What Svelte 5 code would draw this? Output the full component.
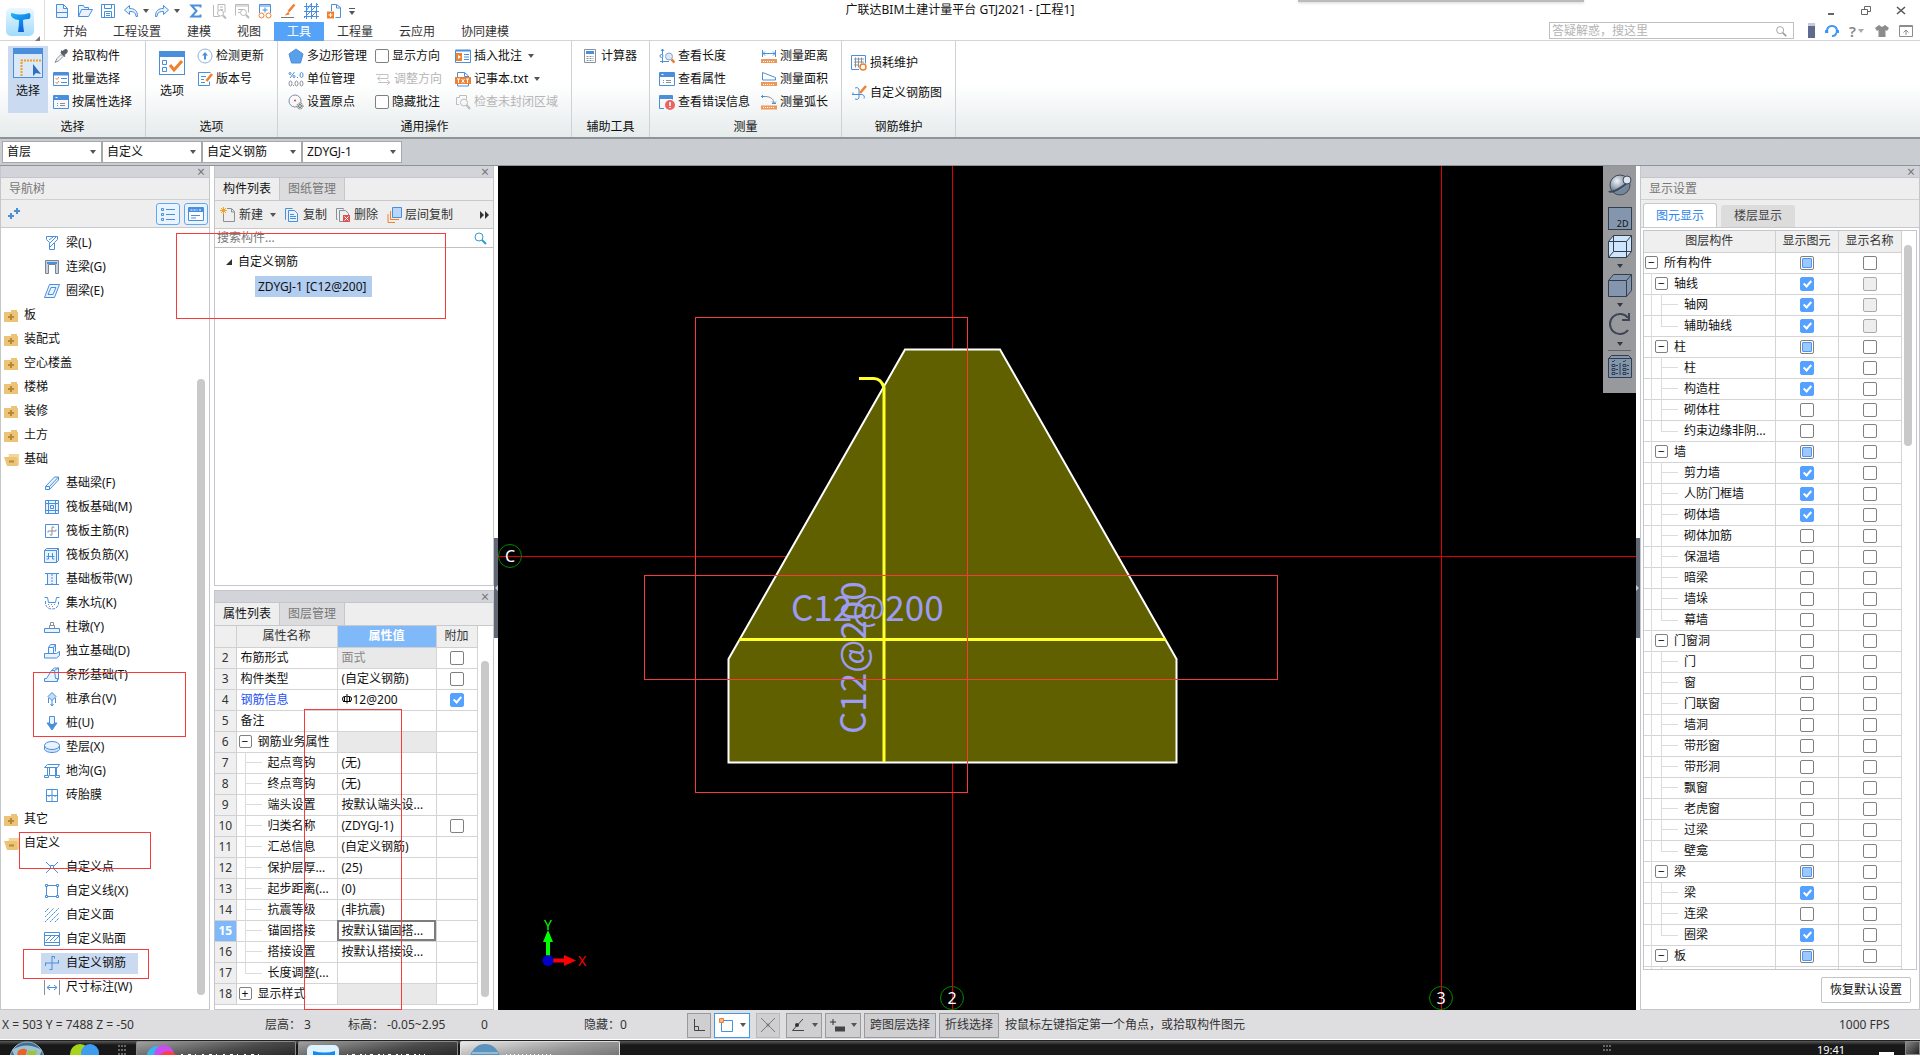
<script lang="ts">
  type Tool = { icon: string; label: string; disabled?: boolean; menu?: boolean; check?: boolean };
  type NavItem = { label: string; icon?: string; folder?: 'open' | 'closed' };
  type Prop = { no: number; name: string; value?: string; add?: boolean; kind?: string };
  type Layer = { label: string; level: number; show: 'on' | 'off' | 'mixed'; locked?: boolean; last?: boolean };

  const B = '#4a8fdc';
  const G = '#8a9099';
  const O = '#f08030';

  const icons: Record<string, string> = {
    file: `<path d="M2.500 1.500h7l4 4v9h-11zM9.500 1.500v4h4M2.500 9.500h11" fill="#eaf3fd"/>`,
    open: `<path d="M1.500 13.500v-11h5l1 2h4v2M1.500 13.500l3-7h11l-4 7z" fill="#eaf3fd"/>`,
    save: `<path d="M1.500 1.500h13v13h-13zM4.500 1.500v4h7v-4M4.500 14.500v-6h7v6M6 10.500h4M6 12.500h4"/>`,
    undo: `<path d="M6.500 2.500l-5 4.500 5 4.500v-3c4 0 6 .5 6.500 5h1.500c0-6-3-8-8-8z" fill="#eaf3fd"/>`,
    redo: `<path d="M9.500 2.500l5 4.500-5 4.500v-3c-4 0-6 .5-6.500 5h-1.500c0-6 3-8 8-8z" fill="#eaf3fd"/>`,
    sum: `<path d="M12.500 4.500v-2h-9l5 5.500-5 5.500h9v-2" stroke-width="2"/>`,
    inspect: `<g stroke="#b9b9b9"><path d="M2.500 2v11.500h6M7 1.500h7v8M7 1.500v6M9 4h3M9 6.500h3"/><circle cx="9.500" cy="10" r="3"/><path d="M12 12.500l3 3" stroke-width="2"/></g>`,
    find: `<g stroke="#b9b9b9"><path d="M1.500 12.500v-11h13v8M1.500 3h13M4 6.500h5M4 9.500h2"/><circle cx="9.500" cy="9.500" r="3"/><path d="M12 12l3 3" stroke-width="2"/></g>`,
    glasses: `<path d="M2.500 10v-8.500h11v8.500M2.500 3h11M8 4.500v5M5.500 7h5"/><g stroke="${O}"><circle cx="4.500" cy="12.500" r="2.500"/><circle cx="11.500" cy="12.500" r="2.500"/></g>`,
    brush: `<path d="M14.500 1.500l-6 7" stroke="${O}" stroke-width="2.500"/><path d="M8.500 8.500l-4 4 5-1z" fill="${O}" stroke="none"/><path d="M1 14.500h13" stroke="#777"/>`,
    hatch: `<path d="M1 3.500h15M1 8.500h15M1 13.500h15M3.500 0v16M8.500 0v16M13.500 0v16M1 15L15 1M3 8l5-7M8 14l6-6"/>`,
    export: `<path d="M5.500 8v-6.500h5l4 3v10h-5M10.500 2v3h4"/><path d="M1 8.500h7v7h-7z" fill="${O}" stroke="none"/><path d="M4.500 10v4M2.500 12h4" stroke="#fff"/>`,
    picker: `<path d="M2 14.500l2-4 4-4 2 2-4 4z" stroke="${G}" fill="#f4f4f4"/><path d="M7.500 5l4 4 1-1-1-1c2-1 4-3 3-5s-3-1-5 1l-1-1z" fill="#58616b" stroke="none"/>`,
    batch: `<path d="M.500 1.500h15v13h-15z"/><path d="M1 2h14v2.500h-14z" fill="${B}" stroke="none"/><path d="M8 7.500h6M8 11.500h6"/><path d="M2.500 7l1.500 1.500 2-2.500M2.500 11l1.500 1.500 2-2.500" stroke="${O}"/>`,
    props: `<path d="M.500 1.500h15v13h-15z"/><path d="M1 2h14v4h-14z" fill="${B}" stroke="none"/><path d="M2.500 3.500h2" stroke="#fff"/><path d="M4 9.500h1M7 9.500h5M4 11.500h1M7 11.500h5" stroke="${G}"/>`,
    update: `<circle cx="8" cy="8" r="7" stroke="#8fb4dd"/><path d="M8 4l3 3.500h-2v4h-2v-4H5z" fill="${B}" stroke="none"/>`,
    version: `<path d="M10 1.500H1.500v13h11v-4M1.500 1.500h12M4 5.500h5M4 8.500h3M4 11.500h4"/><path d="M15 3l-5.500 7" stroke="${O}" stroke-width="2.500"/>`,
    polygon: `<path d="M8 1l7 5-2.500 9h-9L1 6z" fill="#5a9fec" stroke="${B}"/>`,
    unit: `<g stroke="${G}"><ellipse cx="2.500" cy="12.500" rx="1.500" ry="2.500"/><ellipse cx="8.500" cy="12.500" rx="1.500" ry="2.500"/><ellipse cx="13.500" cy="12.500" rx="1.500" ry="2.500"/><path d="M5 14.500h1"/></g><circle cx="2" cy="2.500" r="1"/><circle cx="6" cy="5.500" r="1"/><path d="M2 7l4.500-6M9 6.500h1"/><ellipse cx="13.500" cy="4" rx="1.500" ry="2.500"/>`,
    origin: `<circle cx="7" cy="7" r="6" stroke="#7b90ad"/><circle cx="7" cy="6.500" r="1" fill="#e04030" stroke="none"/><circle cx="12" cy="12" r="3" fill="#ddd" stroke="#777" stroke-dasharray="1.500 1"/><circle cx="12" cy="12" r="1.500" stroke="#777"/>`,
    direct: `<g stroke="#c2c2c2"><path d="M1 3.500h12v4H3M3 11.500h12M5.500 5l-3 2.500 3 2.500M12 9l3 2.500-3 2.500"/></g>`,
    insert: `<path d="M.500 2.500h15v12h-15z"/><path d="M.500 1.500h15v2h-15z" fill="${B}" stroke="none"/><path d="M1 5h6v8h-6z" fill="${O}" stroke="none"/><path d="M3 7l3 2-3 2z" fill="#fff" stroke="none"/><path d="M9 6.500h5M9 9h5M9 11.500h5"/>`,
    txt: `<path d="M2.500 7v-5.500h7l4 3.500v2M2.500 13v2h11v-2M9.500 1.500v4h4"/><path d="M0 6h16v7h-16z" fill="${O}" stroke="none"/><path d="M2 8h3M3.500 8v4M6.500 8l3 4M9.500 8l-3 4M11 8h3M12.500 8v4" stroke="#fff"/>`,
    region: `<g stroke="#bdbdbd"><path d="M4 10.500h-2.500v-7h3v-2h7v4"/><circle cx="9" cy="8.500" r="3.500"/><path d="M11.500 11l3.500 4" stroke-width="2"/></g>`,
    calc: `<path d="M2.500 1.500h11v13h-11z" stroke="${G}" fill="#fff"/><path d="M4 3h8v3h-8z" fill="${B}" stroke="none"/><path d="M4.500 8.500h7M4.500 10.500h7M4.500 12.500h7" stroke="${G}" stroke-dasharray="2 1"/>`,
    length: `<path d="M3.500 1v14M1 13.500h9M2 3l1.500-2 1.500 2"/><circle cx="2.500" cy="8" r="1.500" fill="#fff"/><circle cx="10" cy="8.500" r="3.500" fill="#dce8f8" stroke="#8aa6c8"/><path d="M12.500 11.500l3 3" stroke="${O}" stroke-width="2.500"/>`,
    error: `<path d="M5 14.500H.500v-13h13v4"/><path d="M1 2h12v3h-12z" fill="${B}" stroke="none"/><circle cx="11" cy="11" r="5" fill="#ea6464" stroke="none"/><path d="M11 8v4M11 13v1" stroke="#fff" stroke-width="1.500"/>`,
    dist: `<path d="M1.500 2v7M14.500 2v7M2 5.500h12M4 3.500l-2 2 2 2M12 3.500l2 2-2 2"/><path d="M0 11h16v4h-16z" fill="#ee9858" stroke="none"/><path d="M2 13.500h12" stroke="#fff" stroke-dasharray="1 1"/>`,
    area: `<path d="M1.500 9v-7.500l13 5v2.500z"/><path d="M0 11h16v4h-16z" fill="#ee9858" stroke="none"/><path d="M2 13.500h12" stroke="#fff" stroke-dasharray="1 1"/>`,
    arc: `<path d="M4 2.500c6 0 9 3 9 7" stroke="${G}"/><path d="M1.500 1v3M0 2.500h4M11 7.500l2 2 2-2M11 9.500h4"/><path d="M0 11.500h16v4h-16z" fill="#ee9858" stroke="none"/><path d="M2 13.500h12" stroke="#fff" stroke-dasharray="1 1"/>`,
    loss: `<path d="M8 14.500h-7.500v-14h14v8"/><path d="M3 4h10M3 7h10M3 10h5M4.500 2.500v10M7.500 2.500v10M10.500 2.500v6" stroke="${G}"/><circle cx="12" cy="12" r="3" stroke="${O}" stroke-width="1.500"/>`,
    rebarpic: `<path d="M8 13v-9a3 3 0 0 0-4-1M1 9.500h10a3 3 0 0 1 2 4M2 9.500v-2M8 13a3 3 0 0 1-4 1"/><path d="M15 1l-6 7" stroke="${O}" stroke-width="2.500"/>`,
    beam: `<path d="M2.500 1.500h11v3l-3 3v7h-5v-7l-3-3zM5 5l4-3M6 8l6-6M6 12l4-4"/>`,
    link: `<path d="M1.500 1.500h13v13h-3v-9h-7v9h-3z" fill="#c9d3dd" stroke="#788592"/><path d="M3 4h10" stroke="${B}" stroke-width="2"/>`,
    ring: `<path d="M5.500 1.500h10l-5 13H.500zM7 4.500h5l-3 7H4z" fill="#eaf3fd"/>`,
    bar: `<path d="M1.500 11.500l9-9.500h4v3l-9 9.500h-4zM1.500 11.500h4v3M5.500 11.500l9-9.500" fill="#eaf3fd"/>`,
    raft: `<path d="M1.500 1.500h13v13h-13zM4.500 1.500v13M11.500 1.500v13M1.500 4.500h13M1.500 11.500h13M6.500 6.500h3v3h-3z" fill="#eaf3fd"/>`,
    raftmain: `<path d="M1.500 1.500h13v13h-13z"/><path d="M8 4v8M4 8h8M8 4c2-1 2 1 2 1M8 12c-2 1-2-1-2-1M4 8v1.500M12 8V6.500" stroke="${G}"/>`,
    raftneg: `<path d="M.500 3.500h12v12h-12zM.500 3.500l2-2h12v12l-2 2M12.500 3.500l2-2" fill="#eaf3fd"/><path d="M4.500 6v6M8.500 6v6M2.500 9.500h8M4.500 12h-2M8.500 12h2"/>`,
    strip: `<path d="M3.500 2.500h9v11h-9z" fill="#eaf3fd" stroke="none"/><path d="M1 2.500h14M1 13.500h14M3.500 3v10M12.500 3v10"/><path d="M8 3v10" stroke-dasharray="2 1"/>`,
    pit: `<path d="M.500 2.500h3l1 5h7l1-5h3"/><path d="M1.500 6v3c1 4 4 5 6.500 5s5.500-1 6.500-5v-3" stroke-dasharray="3 1"/><path d="M4 9.500h8M5 11.500h6" stroke="${G}" stroke-dasharray="1 2"/>`,
    pier: `<path d="M.500 9.500h15v4H.500z" fill="#eaf3fd"/><path d="M5.500 9.500v-3h5v3M6.500 6v-2.500h3v2.500" stroke="${G}"/>`,
    indep: `<path d="M.500 10.500h12l3-2v4l-3 2.500H.500zM4.500 10.500v-6l2-3h5v7M9.500 10.500v-6h-5M9.500 4.500l2-3" fill="#eaf3fd"/>`,
    trap: `<path d="M.500 14.500v-3h2l5-8h3l1 8h2v3zM7.500 3.500l3-2.500h4v11l-2 2.500M10.500 3.500l4-2.500" fill="#eaf3fd"/>`,
    cap: `<path d="M8 1.500l4 4-4 4-4-4z" fill="#c5dcf6"/><path d="M8 9v6M4.500 7v5M11.500 7v5M6.500 13l1.500 2 1.500-2"/>`,
    pile: `<path d="M5.500 1.500h5v8h-5z" fill="#eaf3fd"/><path d="M3 8h3v2h4V8h3l-5 7z" fill="${B}"/>`,
    cushion: `<path d="M.500 6.500v4c2 4 13 4 15 0v-4" fill="#cfe2f8"/><ellipse cx="8" cy="6.500" rx="7.500" ry="4" fill="#eaf3fd"/>`,
    trench: `<path d="M.500 4.500l3-3h12l-2 3zM3.500 4.500v8M12.500 4.500v8M.500 12.500h4v2h-4zM11.500 12.500h4v2h-4zM5.500 5v7.500h6V5"/>`,
    brick: `<path d="M2.500 2.500h11v12h-11zM8 2.500v12M2.500 8.500h11M5 8v2M11 8v2"/>`,
    point: `<path d="M2 3l4 4M14 3l-4 4M2 14l4-4M14 14l-4-4M6.500 6.500h3v3h-3z"/>`,
    line: `<path d="M3.500 2.500h9M3.500 13.500h9M2.500 3.500v9M13.500 3.500v9M1.500 1.500h2v2h-2zM12.500 1.500h2v2h-2zM1.500 12.500h2v2h-2zM12.500 12.500h2v2h-2z"/>`,
    face: `<path d="M1 5l4-4M1 10l9-9M1 15L15 1M6 15l9-9M11 15l4-4" stroke-dasharray="2 .500"/>`,
    veneer: `<path d="M.500 1.500h15v13H.500zM.500 4.500h15M.500 11.500h15M2 10l5-5M6 10l5-5M10 10l5-5"/>`,
    rebar: `<path d="M8 1v14M1 8h14M8 1.500h2.500v2M8 14.500H5.500M1.500 8v3M14.500 8V5"/>`,
    dim: `<path d="M.500 1v15M15.500 1v15" stroke="${G}"/><path d="M3 8.500h10M6 6L3 8.500 6 11M10 6l3 2.500-3 2.500"/>`,
    closed: `<path d="M0 5h14v10H0zM7 3h6v2H7z" fill="#ecc477" stroke="none"/><path d="M7 7v6M4 10h6" stroke="#b98a35" stroke-width="2"/>`,
    opened: `<path d="M5 3h10v11H3z" fill="#f4d798" stroke="none"/><path d="M0 6h13l1 9H3z" fill="#ecc477" stroke="none"/><path d="M5 10.500h5" stroke="#b98a35" stroke-width="2"/>`,
    newdoc: `<path d="M3.500 6v8.500h11v-10l-3-3H7M11.500 2v3h3" stroke="${G}"/><path d="M1 1l5 5M6 1L1 6M3.500 0v7M0 3.500h7" stroke="#f5a020"/>`,
    copy: `<path d="M2 12.500h-.500v-11h7"/><path d="M4.500 3.500h6l3 3v8h-9zM6 7.500h4M6 9.500h6M6 11.500h6" fill="#eaf3fd"/>`,
    remove: `<path d="M2.500 12.500h-1v-11h7v1M9 14.500H4.500v-11h6l3 3v2" stroke="${G}"/><path d="M8 8h7v7H8z" fill="#dc5050" stroke="none"/><path d="M9.500 9.500l4 4M13.500 9.500l-4 4" stroke="#fff"/>`,
    floors: `<path d="M4.500 4v8.500H13M2 7v8.500h7" stroke="${O}"/><path d="M6.500 .500h9v10h-9z" fill="#b9d6fb"/>`,
    list: `<path d="M1.500 2.500h2v2h-2zM1.500 7.500h2v2h-2zM1.500 12.500h2v2h-2zM6 3.500h9M6 8.500h9M6 13.500h9"/>`,
    panel: `<path d="M.500 1.500h15v13H.500z" fill="#fff"/><path d="M1 2h14v4H1z" fill="${B}" stroke="none"/><path d="M2.500 4h7M11 4h3" stroke="#fff" stroke-dasharray="2 1"/><path d="M3 9.500h9M3 12h5"/>`,
    search: `<circle cx="7" cy="7" r="4"/><path d="M10 10l4 4" stroke-width="2"/>`,
    ortho: `<path d="M3.500 2v11.500H14M3.500 9.500h4v4" stroke="#444"/>`,
    rect: `<path d="M3.500 3.500h11v11h-11z"/><path d="M1.500 1.500h4v4h-4z" fill="#f8b68a" stroke="${O}"/>`,
    cross: `<path d="M1 1l14 14M15 1L1 15" stroke="#777"/><circle cx="8" cy="8" r="1.500" fill="#777" stroke="none"/>`,
    angle: `<path d="M13 2L2.500 13.500H14" stroke="#444"/><circle cx="7" cy="8" r="2" fill="#333" stroke="none"/>`,
    dyn: `<path d="M4 2v6M1 5h6" stroke="#333"/><path d="M6 9.500h10v5H6z" fill="#444" stroke="none"/>`,
  };

  const quickA = ['file', 'open', 'save'];
  const quickB = ['sum', 'inspect', 'find', 'glasses', 'brush', 'hatch', 'export'];
  const tabs = ['开始', '工程设置', '建模', '视图', '工具', '工程量', '云应用', '协同建模'];

  const pickTools: Tool[] = [
    { icon: 'picker', label: '拾取构件' },
    { icon: 'batch', label: '批量选择' },
    { icon: 'props', label: '按属性选择' },
  ];
  const optionTools: Tool[] = [
    { icon: 'update', label: '检测更新' },
    { icon: 'version', label: '版本号' },
  ];
  const commonTools: Tool[][] = [
    [
      { icon: 'polygon', label: '多边形管理' },
      { icon: 'unit', label: '单位管理' },
      { icon: 'origin', label: '设置原点' },
    ],
    [
      { icon: '', label: '显示方向', check: true },
      { icon: 'direct', label: '调整方向', disabled: true },
      { icon: '', label: '隐藏批注', check: true },
    ],
    [
      { icon: 'insert', label: '插入批注', menu: true },
      { icon: 'txt', label: '记事本.txt', menu: true },
      { icon: 'region', label: '检查未封闭区域', disabled: true },
    ],
  ];
  const measureTools: Tool[][] = [
    [
      { icon: 'length', label: '查看长度' },
      { icon: 'props', label: '查看属性' },
      { icon: 'error', label: '查看错误信息' },
    ],
    [
      { icon: 'dist', label: '测量距离' },
      { icon: 'area', label: '测量面积' },
      { icon: 'arc', label: '测量弧长' },
    ],
  ];
  const rebarTools: Tool[] = [
    { icon: 'loss', label: '损耗维护' },
    { icon: 'rebarpic', label: '自定义钢筋图' },
  ];

  const combos = [
    { name: '楼层', value: '首层' },
    { name: '类别', value: '自定义' },
    { name: '构件类型', value: '自定义钢筋' },
    { name: '构件', value: 'ZDYGJ-1' },
  ];

  const nav: NavItem[] = [
    { label: '梁(L)', icon: 'beam' },
    { label: '连梁(G)', icon: 'link' },
    { label: '圈梁(E)', icon: 'ring' },
    { label: '板', folder: 'closed' },
    { label: '装配式', folder: 'closed' },
    { label: '空心楼盖', folder: 'closed' },
    { label: '楼梯', folder: 'closed' },
    { label: '装修', folder: 'closed' },
    { label: '土方', folder: 'closed' },
    { label: '基础', folder: 'open' },
    { label: '基础梁(F)', icon: 'bar' },
    { label: '筏板基础(M)', icon: 'raft' },
    { label: '筏板主筋(R)', icon: 'raftmain' },
    { label: '筏板负筋(X)', icon: 'raftneg' },
    { label: '基础板带(W)', icon: 'strip' },
    { label: '集水坑(K)', icon: 'pit' },
    { label: '柱墩(Y)', icon: 'pier' },
    { label: '独立基础(D)', icon: 'indep' },
    { label: '条形基础(T)', icon: 'trap' },
    { label: '桩承台(V)', icon: 'cap' },
    { label: '桩(U)', icon: 'pile' },
    { label: '垫层(X)', icon: 'cushion' },
    { label: '地沟(G)', icon: 'trench' },
    { label: '砖胎膜', icon: 'brick' },
    { label: '其它', folder: 'closed' },
    { label: '自定义', folder: 'open' },
    { label: '自定义点', icon: 'point' },
    { label: '自定义线(X)', icon: 'line' },
    { label: '自定义面', icon: 'face' },
    { label: '自定义贴面', icon: 'veneer' },
    { label: '自定义钢筋', icon: 'rebar' },
    { label: '尺寸标注(W)', icon: 'dim' },
  ];
  let current = $state('自定义钢筋');

  const props: Prop[] = [
    { no: 2, name: '布筋形式', value: '面式', add: false, kind: 'readonly' },
    { no: 3, name: '构件类型', value: '(自定义钢筋)', add: false },
    { no: 4, name: '钢筋信息', value: '12@200', add: true, kind: 'rebar' },
    { no: 5, name: '备注' },
    { no: 6, name: '钢筋业务属性', kind: 'minus' },
    { no: 7, name: '起点弯钩', value: '(无)', kind: 'child' },
    { no: 8, name: '终点弯钩', value: '(无)', kind: 'child' },
    { no: 9, name: '端头设置', value: '按默认端头设...', kind: 'child' },
    { no: 10, name: '归类名称', value: '(ZDYGJ-1)', add: false, kind: 'child' },
    { no: 11, name: '汇总信息', value: '(自定义钢筋)', kind: 'child' },
    { no: 12, name: '保护层厚...', value: '(25)', kind: 'child' },
    { no: 13, name: '起步距离(...', value: '(0)', kind: 'child' },
    { no: 14, name: '抗震等级', value: '(非抗震)', kind: 'child' },
    { no: 15, name: '锚固搭接', value: '按默认锚固搭...', kind: 'child' },
    { no: 16, name: '搭接设置', value: '按默认搭接设...', kind: 'child' },
    { no: 17, name: '长度调整(...', kind: 'child' },
    { no: 18, name: '显示样式', kind: 'plus' },
  ];

  const layers: Layer[] = [
    { label: '所有构件', level: 1, show: 'mixed' },
    { label: '轴线', level: 2, show: 'on', locked: true },
    { label: '轴网', level: 3, show: 'on', locked: true },
    { label: '辅助轴线', level: 3, show: 'on', locked: true, last: true },
    { label: '柱', level: 2, show: 'mixed' },
    { label: '柱', level: 3, show: 'on' },
    { label: '构造柱', level: 3, show: 'on' },
    { label: '砌体柱', level: 3, show: 'off' },
    { label: '约束边缘非阴...', level: 3, show: 'off', last: true },
    { label: '墙', level: 2, show: 'mixed' },
    { label: '剪力墙', level: 3, show: 'on' },
    { label: '人防门框墙', level: 3, show: 'on' },
    { label: '砌体墙', level: 3, show: 'on' },
    { label: '砌体加筋', level: 3, show: 'off' },
    { label: '保温墙', level: 3, show: 'off' },
    { label: '暗梁', level: 3, show: 'off' },
    { label: '墙垛', level: 3, show: 'off' },
    { label: '幕墙', level: 3, show: 'off', last: true },
    { label: '门窗洞', level: 2, show: 'off' },
    { label: '门', level: 3, show: 'off' },
    { label: '窗', level: 3, show: 'off' },
    { label: '门联窗', level: 3, show: 'off' },
    { label: '墙洞', level: 3, show: 'off' },
    { label: '带形窗', level: 3, show: 'off' },
    { label: '带形洞', level: 3, show: 'off' },
    { label: '飘窗', level: 3, show: 'off' },
    { label: '老虎窗', level: 3, show: 'off' },
    { label: '过梁', level: 3, show: 'off' },
    { label: '壁龛', level: 3, show: 'off', last: true },
    { label: '梁', level: 2, show: 'mixed' },
    { label: '梁', level: 3, show: 'on' },
    { label: '连梁', level: 3, show: 'off' },
    { label: '圈梁', level: 3, show: 'on', last: true },
    { label: '板', level: 2, show: 'mixed' },
    { label: '', level: 3, show: 'on' },
  ];
</script>

{#snippet icon(name: string)}
  <svg class="icon" viewBox="0 0 16 16" aria-hidden="true">{@html icons[name]}</svg>
{/snippet}

{#snippet tool(t: Tool)}
  {#if t.check}
    <label class="tool"><input type="checkbox" />{t.label}</label>
  {:else}
    <button class="tool" disabled={t.disabled}>
      {@render icon(t.icon)}{t.label}{#if t.menu}<i class="caret"></i>{/if}
    </button>
  {/if}
{/snippet}

<div class="app">
  <header>
    <div class="left">
      <button class="logo" aria-label="菜单">
        <svg viewBox="0 0 38 40" width="38" height="40">
          <defs>
            <linearGradient id="lg" x1="0" y1="0" x2="0" y2="1"><stop offset="0" stop-color="#eaf7ff" /><stop offset="1" stop-color="#a2dbfb" /></linearGradient>
            <linearGradient id="lt" x1="0" y1="0" x2="0.6" y2="1"><stop offset="0" stop-color="#1fb9f6" /><stop offset="1" stop-color="#0c5ee0" /></linearGradient>
          </defs>
          <rect x="3" y="7" width="28" height="28" rx="5" fill="url(#lg)" />
          <path d="M9 12q8 3 17 0c2 0 2 5 0 6q-4 0-6 1 0 6 1 12h-6q1-6 1-12-4 0-6-2c-2-1-3-5-1-5z" fill="url(#lt)" />
          <path d="M37 35v5h-5z" fill="#777" />
        </svg>
      </button>
      <div class="heads">
        <div class="quick">
          {#each quickA as q}<button class="q" aria-label={q}>{@render icon(q)}</button>{/each}
          <button class="q wide" aria-label="撤销">{@render icon('undo')}<i class="caret"></i></button>
          <button class="q wide" aria-label="恢复">{@render icon('redo')}<i class="caret"></i></button>
          <span class="qgap"></span>
          {#each quickB as q}<button class="q" aria-label={q}>{@render icon(q)}</button>{/each}
          <button class="q more" aria-label="更多"><i></i><i class="caret"></i></button>
        </div>
        <nav class="tabs">
          {#each tabs as t}<button class:active={t === '工具'}>{t}</button>{/each}
        </nav>
      </div>
    </div>
    <h1>广联达BIM土建计量平台 GTJ2021 - [工程1]</h1>
    <div class="right">
      <div class="shade"></div>
      <div class="win">
        <button aria-label="最小化"><svg width="12" height="12"><path d="M3 9h6" stroke="#666" stroke-width="2" /></svg></button>
        <button aria-label="还原"><svg width="12" height="12"><path d="M4.500 4v-2.500h6v5H8M1.500 4.500h6v5h-6z" stroke="#666" fill="none" /></svg></button>
        <button aria-label="关闭"><svg width="12" height="12"><path d="M2 2l8 7M10 2L2 9" stroke="#555" stroke-width="1.500" /></svg></button>
      </div>
      <div class="help">
        <div class="ask"><input aria-label="搜索帮助" placeholder="答疑解惑，搜这里" />{@render icon('search')}</div>
        <span class="avatar"></span>
        <button aria-label="客服"><svg width="14" height="14" fill="none" stroke="#3b97f5" stroke-width="2"><path d="M2.500 9C1 4 4 2 7 2s6 2 4.500 7M11 9c0 3-2 3-4 3" /><path d="M1.500 6v3M12.500 6v3" stroke-width="3" /></svg></button>
        <button class="qm" aria-label="帮助">?<i class="caret"></i></button>
        <button aria-label="皮肤"><svg width="14" height="14"><path d="M4 1l3 2 3-2 4 3-2 3-1.500-1v7h-7V6L2 7 0 4z" fill="#8c8c8c" /></svg></button>
        <button aria-label="折叠功能区"><svg width="14" height="14" fill="none" stroke="#8c8c8c"><path d="M.500 1.500h13v11H.500zM1 2.500h12M7 11V6M4.500 8.500L7 6l2.500 2.500" /></svg></button>
      </div>
    </div>
  </header>

  <section class="ribbon">
    <div class="group g1">
      <div class="body">
        <button class="big sel">
          <svg width="30" height="30" fill="none">
            <rect x=".5" y=".5" width="29" height="29" fill="#dbe8f8" stroke={B} /><path d="M0 0h30v6H0z" fill={B} />
            <path d="M8.500 28V12.500H28" stroke="#f0a020" stroke-width="2" stroke-dasharray="2 1" /><path d="M20 16v12l3-3 5 1z" fill="#2f6fc4" />
          </svg>
          选择
        </button>
        <div class="col">{#each pickTools as t}{@render tool(t)}{/each}</div>
      </div>
      <div class="name">选择</div>
    </div>
    <div class="group g2">
      <div class="body">
        <button class="big opt">
          <svg width="26" height="24" fill="none">
            <rect x=".5" y=".5" width="25" height="23" fill="#fff" stroke={B} /><path d="M0 0h26v6H0z" fill={B} />
            <path d="M3.500 9.500h4v4h-4zM3.500 16.500h4v4h-4z" stroke={B} /><path d="M11 14l4 5 8-9" stroke={O} stroke-width="3" />
          </svg>
          选项
        </button>
        <div class="col">{#each optionTools as t}{@render tool(t)}{/each}</div>
      </div>
      <div class="name">选项</div>
    </div>
    <div class="group g3">
      <div class="body">
        {#each commonTools as c}<div class="col">{#each c as t}{@render tool(t)}{/each}</div>{/each}
      </div>
      <div class="name">通用操作</div>
    </div>
    <div class="group g4">
      <div class="body"><div class="col">{@render tool({ icon: 'calc', label: '计算器' })}</div></div>
      <div class="name">辅助工具</div>
    </div>
    <div class="group g5">
      <div class="body">
        {#each measureTools as c}<div class="col">{#each c as t}{@render tool(t)}{/each}</div>{/each}
      </div>
      <div class="name">测量</div>
    </div>
    <div class="group g6">
      <div class="body"><div class="col loose">{#each rebarTools as t}{@render tool(t)}{/each}</div></div>
      <div class="name">钢筋维护</div>
    </div>
  </section>

  <div class="combos">
    {#each combos as c}
      <label class="combo"><select aria-label={c.name}><option>{c.value}</option></select><i class="caret"></i></label>
    {/each}
  </div>

  <main>
    <aside class="panel nav">
      <div class="strip"><button aria-label="关闭导航树">×</button></div>
      <div class="title">导航树</div>
      <div class="navbar">
        <svg width="14" height="12" stroke={B} stroke-width="2"><path d="M3 5v6M0 8h6M9 0v6M6 3h6" /></svg>
        <span class="grow"></span>
        <button class="view" aria-label="列表视图">{@render icon('list')}</button>
        <button class="view" aria-label="面板视图">{@render icon('panel')}</button>
      </div>
      <div class="scroller">
        <ul>
          {#each nav as n}
            <li>
              <button class:folder={n.folder} class:current={current === n.label} onclick={() => (current = n.label)}>
                {@render icon(n.folder ? (n.folder === 'open' ? 'opened' : 'closed') : n.icon ?? '')}{n.label}
              </button>
            </li>
          {/each}
        </ul>
        <div class="bar"><div class="thumb low"></div></div>
      </div>
    </aside>

    <div class="mid">
      <section class="panel comps">
        <div class="strip"><button aria-label="关闭构件列表">×</button></div>
        <div class="ptabs"><button class="on">构件列表</button><button>图纸管理</button></div>
        <div class="compbar">
          <button>{@render icon('newdoc')}新建<i class="caret"></i></button>
          <button>{@render icon('copy')}复制</button>
          <button>{@render icon('remove')}删除</button>
          <button>{@render icon('floors')}层间复制</button>
          <span class="grow"></span>
          <svg width="9" height="8" fill="#333"><path d="M0 0l4 4-4 4zM5 0l4 4-4 4z" /></svg>
        </div>
        <div class="find"><input aria-label="搜索构件" placeholder="搜索构件..." />{@render icon('search')}</div>
        <div class="tree">
          <div class="root"><svg width="6" height="6"><path d="M6 0v6H0z" fill="#333" /></svg>自定义钢筋</div>
          <button class="leaf">ZDYGJ-1 [C12@200]</button>
        </div>
      </section>

      <section class="panel attrs">
        <div class="strip"><button aria-label="关闭属性列表">×</button></div>
        <div class="ptabs"><button class="on">属性列表</button><button>图层管理</button></div>
        <div class="scroller">
          <div class="sheet">
            <table>
              <colgroup><col class="c-no" /><col class="c-name" /><col class="c-val" /><col class="c-add" /></colgroup>
              <thead><tr><th></th><th>属性名称</th><th class="hot">属性值</th><th>附加</th></tr></thead>
              <tbody>
                {#each props as p}
                  <tr>
                    <th class:hot={p.no === 15}>{p.no}</th>
                    <td>
                      <div class="cell">
                        {#if p.kind === 'minus' || p.kind === 'plus'}
                          <button class="toggle" aria-label="展开或折叠">{p.kind === 'minus' ? '−' : '+'}</button>
                        {:else if p.kind === 'child'}
                          <span class="rail branch" class:last={p.no === 17}></span>
                        {/if}
                        <span class:key={p.kind === 'rebar'}>{p.name}</span>
                      </div>
                    </td>
                    <td class:grey={p.kind === 'readonly' || p.kind === 'minus' || p.kind === 'plus'} class:focus={p.no === 15}>
                      {#if p.kind === 'rebar'}<svg class="grade" width="10" height="10" fill="none" stroke="#000"><path d="M5 0v9.500M2.500 3v4M7.500 3v4M1 7.500h8M4.500 2.500h-2q-2 0-2 2.500t2 2.500M5.500 2.500h2q2 0 2 2.500t-2 2.500" /></svg>{/if}{p.value ?? ''}
                    </td>
                    <td class="mark">{#if p.add !== undefined}<input type="checkbox" aria-label="附加 {p.name}" checked={p.add} />{/if}</td>
                  </tr>
                {/each}
              </tbody>
            </table>
          </div>
          <div class="bar"><div class="thumb attr"></div></div>
        </div>
      </section>
    </div>

    <div class="split"><button aria-label="收起左侧"><svg width="4" height="6"><path d="M4 0v6L1 3z" fill="#c5cad2" /></svg></button></div>

    <div class="canvas">
      <svg class="scene" width="100%" height="100%">
        <g stroke="#e00000">
          <path d="M454.500 0v832M943.500 0v832" />
          <line x1="12" y1="390.500" x2="100%" y2="390.500" />
        </g>
        <path d="M407 183.500h95L678.500 493v103.500H230.500V493z" fill="#606000" stroke="#fff" stroke-width="2" />
        <g stroke="#ffff2a" stroke-width="3" fill="none">
          <path d="M361 212.500h15q7 0 10 9V596" /><path d="M241 473.500h427" />
        </g>
        <g fill="#9c9cf4" class="mark">
          <text x="293" y="455">C12@200</text>
          <text transform="translate(368 568) rotate(-90)">C12@200</text>
        </g>
        <g fill="none" stroke="#008a00">
          <circle cx="12" cy="390" r="11.500" /><circle cx="454" cy="832" r="11.500" /><circle cx="943" cy="832" r="11.500" />
        </g>
        <g stroke="#e00000"><path d="M454.500 820v24M943.500 820v24M0 390.500h24" /></g>
        <g fill="#fff" class="bubble">
          <text x="12" y="396">C</text><text x="454" y="838">2</text><text x="943" y="838">3</text>
        </g>
        <g>
          <path d="M50 790v-22" stroke="#0f0" stroke-width="4" /><path d="M45 776l5-12 5 12z" fill="#0f0" />
          <path d="M55 794.500h12" stroke="#f00" stroke-width="4" /><path d="M66 789l12 5.500-12 5.500z" fill="#f00" />
          <circle cx="50" cy="794.500" r="5.500" fill="#0000c8" />
        </g>
        <g class="axis"><text x="50" y="764" fill="#0f0">Y</text><text x="84" y="800" fill="#f00">X</text></g>
      </svg>
      <div class="viewbar">
        <button class="h37" aria-label="动态观察"><svg width="24" height="22"><defs><radialGradient id="sp" cx=".35" cy=".3"><stop offset="0" stop-color="#f2f5f8" /><stop offset="1" stop-color="#74869c" /></radialGradient></defs><circle cx="12" cy="11" r="10" fill="url(#sp)" stroke="#3d4858" /><path d="M1 17c2 3 18-5 21-13" stroke="#3d4858" fill="none" stroke-width="2" /><circle cx="19" cy="6" r="4" fill="#dfe5ec" stroke="#3d4858" /></svg></button>
        <button class="h30" aria-label="二维"><span class="two">2D</span></button>
        <button class="h26" aria-label="线框"><svg width="24" height="23" fill="#cfe5fb" stroke="#333e4c"><path d="M.500 6.500l5-6h18v16l-5 6H.500z" /><path d="M.500 6.500h18l5-6M18.500 6.500v16M5.500.500v16h18M5.500 16.500l-5 6" fill="none" /></svg></button>
        <i class="caret"></i>
        <button class="h26" aria-label="实体"><svg width="24" height="23" fill="#8396ae" stroke="#333e4c"><path d="M.500 6.500l5-6h18v16l-5 6H.500z" /><path d="M.500 6.500h18l5-6M18.500 6.500v16" fill="none" /></svg></button>
        <i class="caret"></i>
        <button class="h26" aria-label="旋转"><svg width="24" height="24" fill="none" stroke="#3d4654" stroke-width="2"><path d="M20 6A10 10 0 1 0 20 18M21 1v7h-7" /></svg></button>
        <i class="caret"></i>
        <hr />
        <button class="h30" aria-label="显示设置"><svg width="24" height="23" fill="#8396ae" stroke="#333e4c"><path d="M.500 3.500l3-3h17l3 3v19H.500zM.500 3.500h23" /><path d="M12 8v12M4 9.500h3v2H4zM4 13.500h3v2H4zM4 17.500h3v2H4zM15 9.500h3v2h-3zM15 13.500h3v2h-3zM15 17.500h3v2h-3zM8 10.500h2M8 14.500h2M8 18.500h2M19 10.500h2M19 14.500h2M19 18.500h2M4 6l1 1 2-2M15 6l1 1 2-2" fill="none" /></svg></button>
      </div>
    </div>

    <div class="split"><button aria-label="收起右侧"><svg width="4" height="6"><path d="M0 0v6l3-3z" fill="#c5cad2" /></svg></button></div>

    <aside class="panel layers">
      <div class="strip"><button aria-label="关闭显示设置">×</button></div>
      <div class="title">显示设置</div>
      <div class="ltabs"><button class="on">图元显示</button><button>楼层显示</button></div>
      <div class="scroller frame">
        <div class="sheet">
          <table>
            <colgroup><col class="c-layer" /><col class="c-box" /><col class="c-box" /></colgroup>
            <thead><tr><th>图层构件</th><th>显示图元</th><th>显示名称</th></tr></thead>
            <tbody>
              {#each layers as l}
                <tr>
                  <td>
                    <div class="cell lv">
                      {#if l.level > 1}<span class="rail" class:short={l.level === 2}></span>{/if}
                      {#if l.level < 3}
                        <button class="toggle" aria-label="展开或折叠">−</button>
                      {:else}
                        <span class="rail branch" class:last={l.last}></span>
                      {/if}
                      <span>{l.label}</span>
                    </div>
                  </td>
                  <td class="mark"><input type="checkbox" aria-label="显示图元 {l.label}" checked={l.show === 'on'} class:mixed={l.show === 'mixed'} /></td>
                  <td class="mark"><input type="checkbox" aria-label="显示名称 {l.label}" disabled={l.locked} /></td>
                </tr>
              {/each}
            </tbody>
          </table>
        </div>
        <div class="bar"><div class="thumb high"></div></div>
      </div>
      <div class="foot"><button>恢复默认设置</button></div>
    </aside>

    <svg class="notes" width="100%" height="100%" fill="none" stroke="#f53b3b" aria-hidden="true">
      <rect x="176.500" y="67.500" width="269" height="85" />
      <rect x="33.500" y="506.500" width="152" height="64" />
      <rect x="19.500" y="666.500" width="131" height="36" />
      <rect x="23.500" y="783.500" width="125" height="29" />
      <rect x="304.500" y="543.500" width="97" height="300" />
      <rect x="695.500" y="151.500" width="272" height="475" />
      <rect x="644.500" y="409.500" width="633" height="104" />
    </svg>
  </main>

  <footer>
    <span class="s-pos">X = 503 Y = 7488 Z = -50</span>
    <span class="s-floor">层高： 3</span>
    <span class="s-elev">标高： -0.05~2.95</span>
    <span class="s-num">0</span>
    <span class="s-num">隐藏：0</span>
    <div class="modes">
      <button aria-label="正交">{@render icon('ortho')}</button>
      <button class="lit" aria-label="矩形选择">{@render icon('rect')}<i class="caret"></i></button>
      <button class="dim" aria-label="交点">{@render icon('cross')}</button>
      <button aria-label="角度">{@render icon('angle')}<i class="caret"></i></button>
      <button aria-label="动态输入">{@render icon('dyn')}<i class="caret"></i></button>
      <button class="word">跨图层选择</button>
      <button class="word">折线选择</button>
    </div>
    <span>按鼠标左键指定第一个角点，或拾取构件图元</span>
    <span class="grow"></span>
    <span class="s-fps">1000 FPS</span>
  </footer>

  <div class="taskbar">
    <svg class="orb" width="136" height="14">
      <circle cx="27" cy="18" r="17" fill="#3b6f93" stroke="#9fb9c8" /><path d="M12 9q14-9 30 0l-2 5H14z" fill="#9dc0d4" />
      <path d="M18 10q5-4 9-1l-1 5h-9z" fill="#e8632a" /><path d="M28 9q5 2 9 0l-1 5h-9z" fill="#9ac53a" />
      <circle cx="80" cy="13" r="10" fill="#a4d51c" /><circle cx="90" cy="12" r="9" fill="#3f9df0" />
      <g fill="#666"><path d="M118 4h2v2h-2zM121 4h2v2h-2zM124 4h2v2h-2zM118 8h2v2h-2zM121 8h2v2h-2zM124 8h2v2h-2zM118 12h2v2h-2zM121 12h2v2h-2zM124 12h2v2h-2z" /></g>
    </svg>
    <button class="task" aria-label="任务一"><svg width="130" height="14"><circle cx="20" cy="14" r="10" fill="#38b4ee" /><circle cx="27" cy="13" r="10" fill="#c94df0" /><circle cx="31" cy="19" r="10" fill="#ff4040" /><path d="M44 12.500h80" stroke="#fff" stroke-dasharray="2 5 3 4 1 6" /></svg></button>
    <button class="task" aria-label="任务二"><svg width="130" height="14"><rect x="8" y="3" width="32" height="30" rx="5" fill="#dff2ff" /><path d="M14 9q12 3 22 0v6H14z" fill="#168af4" /><path d="M48 12.500h78" stroke="#fff" stroke-dasharray="1 4 3 5 2 3" /></svg></button>
    <button class="task light" aria-label="任务三"><svg width="120" height="14"><circle cx="24" cy="17" r="15" fill="#5c93bd" /><path d="M11 11h26" stroke="#cfe2ee" /><path d="M45 12.500h46" stroke="#fff" stroke-dasharray="1 3" /></svg></button>
    <span class="grow"></span>
    <svg width="10" height="14" fill="#666"><path d="M1 4h2v2H1zM4 4h2v2H4zM7 4h2v2H7zM1 8h2v2H1zM4 8h2v2H4zM7 8h2v2H7z" /></svg>
    <time>19:41</time>
    <span class="flag"></span>
    <span class="peek"></span>
  </div>
</div>

<style>
  :global(body) { margin: 0; }
  .app { height: 100vh; display: flex; flex-direction: column; overflow: hidden; background: #fff; color: #111; font: 12px/20px "Noto Sans", "Noto Sans CJK SC", sans-serif; }
  button { font: inherit; color: inherit; background: none; border: 0; padding: 0; display: flex; align-items: center; white-space: nowrap; }
  input, select { font: inherit; color: inherit; }
  .icon { width: 16px; height: 16px; flex: none; fill: none; stroke: #4a8fdc; }
  .caret { flex: none; width: 0; height: 0; border: 3px solid transparent; border-top: 4px solid #555; border-bottom: 0; }
  .grow { flex: 1; }

  input[type="checkbox"] { appearance: none; flex: none; box-sizing: border-box; width: 14px; height: 14px; margin: 0; border: 1px solid #808080; border-radius: 2px; background: #fff; position: relative; }
  input[type="checkbox"]:disabled { background: #eee; border-color: #aaa; }
  input[type="checkbox"]:checked { background: #55a1ff; border-color: #55a1ff; }
  input[type="checkbox"]:checked::before { content: ''; position: absolute; left: 4px; top: 1px; width: 3px; height: 6px; border: solid #fff; border-width: 0 2px 2px 0; transform: rotate(42deg); }
  .mixed::before { content: ''; position: absolute; inset: 1px; border: 1px solid #4a98f5; border-radius: 1px; background: #9cc8ff; }

  header { display: grid; grid-template-columns: 1fr auto 1fr; height: 40px; border-bottom: 1px solid #d4d4d4; flex: none; }
  .left { display: flex; }
  .logo { width: 45px; border-right: 1px solid #ddd; justify-content: center; box-sizing: border-box; flex: none; }
  .heads { display: flex; flex-direction: column; padding-left: 5px; }
  .quick { display: flex; height: 22px; align-items: center; }
  .q { width: 23px; justify-content: center; }
  .q.wide { width: 31px; gap: 4px; padding-left: 4px; box-sizing: border-box; justify-content: flex-start; }
  .q.more { flex-direction: column; gap: 2px; width: 14px; }
  .q.more i:first-child { width: 6px; border-top: 1px solid #555; }
  .qgap { width: 3px; }
  .tabs { display: flex; }
  .tabs button { height: 19px; padding: 0 13px; color: #333; }
  .tabs .active { background: #55a3f8; color: #fff; }
  h1 { margin: 0; font: inherit; }
  .right { position: relative; display: flex; flex-direction: column; align-items: flex-end; }
  .shade { position: absolute; top: 0; right: 336px; width: 286px; height: 2px; background: #bbb; box-shadow: 0 1px 3px #ccc; }
  .win { display: flex; gap: 23px; height: 21px; padding-right: 13px; }
  .help { display: flex; align-items: center; gap: 10px; height: 19px; padding-right: 7px; }
  .ask { display: flex; align-items: center; width: 245px; height: 17px; border: 1px solid #c0c0c0; padding-right: 5px; margin-right: 4px; box-sizing: border-box; }
  .ask input { flex: 1; min-width: 0; border: 0; padding: 0 2px; height: 14px; }
  .ask input::placeholder { color: #b4b4b4; }
  .ask .icon { stroke: #999; width: 14px; }
  .avatar { width: 7px; height: 15px; background: linear-gradient(#c5cbd8 20%, #5f6b8c 20%); }
  .qm { font-size: 15px; font-weight: 600; color: #888; gap: 2px; width: 16px; }
  .qm .caret { border-top-color: #aaa; }

  .ribbon { flex: none; display: flex; height: 96px; background: linear-gradient(#fff 45%, #e6ebec); border-bottom: 2px solid #8f9499; }
  .group { box-sizing: border-box; display: flex; flex-direction: column; border-right: 1px solid #cfd2d4; }
  .body { flex: 1; display: flex; padding-top: 3px; gap: 5px; }
  .name { text-align: center; height: 20px; }
  .g1 { width: 146px; }
  .g1 .body { padding-left: 8px; }
  .g2 { width: 132px; }
  .g2 .body { padding-left: 6px; }
  .g3 { width: 294px; }
  .g3 .body { padding-left: 10px; gap: 8px; }
  .g3 .col + .col { min-width: 72px; }
  .g4 { width: 78px; }
  .g4 .body { padding-left: 10px; }
  .g5 { width: 192px; }
  .g5 .body { padding-left: 9px; gap: 11px; }
  .g6 { width: 114px; }
  .g6 .body { padding-left: 9px; }
  .col { display: flex; flex-direction: column; }
  .tool { height: 23px; gap: 3px; display: flex; align-items: center; white-space: nowrap; }
  .tool:disabled { color: #b5b5b5; }
  .tool .caret { margin-left: 3px; }
  .loose { padding-top: 4px; }
  .loose .tool { height: 30px; }
  .big { flex-direction: column; width: 40px; height: 67px; margin-top: 2px; padding-top: 2px; gap: 3px; box-sizing: border-box; }
  .opt { padding-top: 5px; gap: 6px; }
  .sel { background: #c9daf1; }

  .combos { flex: none; display: flex; height: 27px; padding: 2px; box-sizing: border-box; background: #c9ccd0; border-bottom: 1px solid #909499; }
  .combo { position: relative; width: 100px; }
  .combo select { appearance: none; width: 100%; height: 22px; padding: 0 4px; border: 1px solid #a6a8ab; border-radius: 0; background: #fff; }
  .combo .caret { position: absolute; right: 6px; top: 9px; }

  main { flex: 1; min-height: 0; display: flex; position: relative; }
  .notes { position: absolute; inset: 0; pointer-events: none; }
  .panel { box-sizing: border-box; display: flex; flex-direction: column; border: 1px solid #c4c6cb; border-top: 0; min-height: 0; background: #fff; }
  .nav { width: 210px; margin-right: 4px; }
  .mid { width: 280px; display: flex; flex-direction: column; gap: 4px; }
  .comps { flex: 1; }
  .layers { width: 280px; }
  .strip { flex: none; height: 12px; display: flex; justify-content: flex-end; align-items: center; padding-right: 3px; background: #d3d4da; border-bottom: 1px solid #c4c6cb; box-sizing: border-box; }
  .strip button { width: 10px; height: 10px; font-size: 14px; line-height: 10px; color: #777; justify-content: center; }
  .title { flex: none; height: 21px; padding-left: 8px; line-height: 22px; color: #777; background: #eee; border-bottom: 1px solid #d0d1d5; }
  .navbar { flex: none; height: 27px; display: flex; align-items: center; gap: 4px; padding: 0 1px 0 7px; background: #eee; border-bottom: 1px solid #c8c9cd; }
  .view { width: 24px; height: 22px; box-sizing: border-box; justify-content: center; border: 1px solid #62a7f5; border-radius: 3px; background: #eaf4ff; }
  .scroller { flex: 1; min-height: 0; display: flex; overflow: hidden; }
  .bar { flex: none; width: 12px; }
  .thumb { width: 8px; border-radius: 4px; background: #c9c9c9; }
  .low { height: 616px; margin-top: 151px; }
  .attr { height: 336px; margin-top: 35px; }
  .high { height: 201px; margin-top: 14px; }
  ul { list-style: none; flex: 1; margin: 0; padding: 3px 0 0; }
  li { height: 24px; display: flex; align-items: center; }
  li button { height: 21px; gap: 6px; margin-left: 40px; padding: 0 12px 0 3px; }
  li .folder { margin-left: 0; gap: 4px; }
  li .current { background: #c9daf1; }

  .ptabs { flex: none; display: flex; height: 22px; background: #eee; border-bottom: 1px solid #c8c9cd; }
  .ptabs button { width: 65px; justify-content: center; background: #dcdcde; color: #777; border-right: 1px solid #c4c6cb; box-sizing: border-box; }
  .ptabs .on { background: #eee; color: #111; }
  .compbar { flex: none; display: flex; align-items: center; height: 27px; gap: 8px; padding: 0 4px 0 5px; background: #eee; border-bottom: 1px solid #c8c9cd; color: #333; }
  .compbar button { gap: 3px; }
  .compbar .caret { margin-left: 4px; }
  .find { flex: none; display: flex; align-items: center; height: 18px; padding-right: 5px; border-bottom: 1px solid #c0c1c5; }
  .find input { flex: 1; min-width: 0; border: 0; padding: 0 2px; height: 16px; }
  .find input::placeholder { color: #777; }
  .find .icon { stroke: #2d9cd0; }
  .tree { padding-top: 2px; }
  .root { height: 24px; display: flex; align-items: center; gap: 6px; padding-left: 11px; }
  .leaf { height: 21px; margin: 2px 0 0 40px; padding: 0 5px 0 3px; background: #b1cdf0; }
  .attrs { flex: none; height: 420px; border-top: 1px solid #c4c6cb; }

  .sheet { flex: 1; overflow: hidden; }
  table { border-collapse: collapse; table-layout: fixed; line-height: 18px; }
  .attrs table { width: 262px; }
  .c-no { width: 21px; }
  .c-name { width: 101px; }
  .c-val { width: 99px; }
  .c-add { width: 41px; }
  .c-layer { width: 131px; }
  .c-box { width: 63px; }
  tr { height: 21px; }
  th { box-sizing: border-box; height: 21px; padding: 0; font-weight: 400; color: #333; background: #efefef; border: solid #d0d0d0; border-width: 0 1px 1px 0; }
  td { box-sizing: border-box; height: 21px; padding: 0 0 0 4px; white-space: nowrap; border: solid #d4d4d4; border-width: 0 1px 1px 0; }
  td.mark { padding: 0; text-align: center; }
  td.mark input { display: block; margin: 0 auto; }
  td.grey { background: #e9e9e9; color: #888; }
  td.focus { outline: 2px solid #7d7d7d; outline-offset: -2px; }
  .hot { background: #80b9fa; color: #fff; font-weight: 700; }
  .key { color: #1a50f0; }
  .grade { margin-right: 1px; }
  .cell { display: flex; align-items: center; height: 20px; }
  .attrs .toggle { margin-left: -2px; }
  .toggle { flex: none; width: 13px; height: 13px; box-sizing: border-box; justify-content: center; border: 1px solid #808080; border-radius: 2px; background: #fff; line-height: 10px; margin-right: 6px; }
  .rail { flex: none; box-sizing: border-box; width: 10px; height: 21px; border-left: 1px solid #dcdcdc; }
  .rail.short { width: 4px; }
  .branch { position: relative; width: 23px; }
  .attrs .branch { margin-left: 4px; }
  .branch::after { content: ''; position: absolute; left: 0; top: 10px; width: 16px; border-top: 1px solid #dcdcdc; }
  .last { height: 11px; align-self: flex-start; }
  .layers td:first-child { padding-left: 1px; }
  .lv .rail:first-child { margin-left: 6px; }

  .ltabs { flex: none; display: flex; align-items: flex-end; gap: 4px; height: 27px; padding-left: 2px; background: #eee; border-bottom: 1px solid #c8c9cd; }
  .ltabs button { height: 22px; width: 74px; justify-content: center; background: #dcdcdc; border-radius: 3px 3px 0 0; color: #444; }
  .ltabs .on { height: 24px; background: #fff; color: #2f86ea; border: 1px solid #c8c9cd; border-bottom: 0; }
  .frame { margin: 2px 2px 0; border: 1px solid #c4c6cb; }
  .layers table { width: 257px; }
  .foot { flex: none; display: flex; justify-content: flex-end; padding: 7px 8px 6px; }
  .foot button { height: 26px; padding: 0 8px; border: 1px solid #c4c4c4; border-radius: 2px; box-sizing: border-box; }

  .split { flex: none; width: 4px; display: flex; align-items: center; }
  .split button { width: 4px; height: 100px; background: #606876; }
  .canvas { flex: 1; min-width: 0; position: relative; background: #000; overflow: hidden; }
  .scene { display: block; }
  .scene .mark { font: 400 35px "Noto Sans CJK SC", sans-serif; }
  .bubble { font-size: 16px; text-anchor: middle; }
  .axis { font-size: 14px; text-anchor: middle; }
  .viewbar { position: absolute; top: 0; right: 0; width: 33px; height: 227px; display: flex; flex-direction: column; align-items: center; background: #98999d; }
  .viewbar button { justify-content: center; }
  .viewbar .caret { margin: 5px 0 4px; border-top-color: #2f3743; }
  .viewbar hr { width: 23px; margin: 0; border: 0; border-top: 1px solid #666; }
  .h37 { height: 37px; }
  .h30 { height: 30px; }
  .h26 { height: 26px; }
  .two { box-sizing: border-box; width: 24px; height: 23px; padding: 9px 2px 0 0; border: 1px solid #333e4c; background: #8396ae; font-size: 9px; line-height: 14px; text-align: right; }

  footer { flex: none; display: flex; align-items: center; height: 28px; padding-top: 1px; background: #dedee0; border-bottom: 1px solid #fff; color: #333; white-space: nowrap; }
  .s-pos { width: 263px; padding-left: 2px; }
  .s-floor { width: 83px; }
  .s-elev { width: 133px; }
  .s-num { width: 103px; }
  .s-fps { width: 81px; }
  .modes { display: flex; gap: 3px; margin-right: 6px; }
  .modes button { height: 25px; box-sizing: border-box; border: 1px solid #9a9a9c; background: #cfcfd2; padding: 0 3px; gap: 6px; }
  .modes .word { padding: 0 5px; }
  .modes .lit { background: #fff; border-color: #3b97f0; }
  .modes .dim { border-color: #b8b8ba; margin: 0 3px; }

  .taskbar { flex: none; display: flex; gap: 2px; height: 15px; box-sizing: border-box; overflow: hidden; border-top: 1px solid #222; background: linear-gradient(#5a5a5a, #181818 4px); }
  .orb { margin-right: -2px; flex: none; }
  .task { width: 160px; height: 14px; box-sizing: border-box; overflow: hidden; border: 1px solid #8a8a8a; border-bottom: 0; border-radius: 2px 2px 0 0; background: linear-gradient(170deg, #a0a0a0, #4a4a4a 60%, #2a2a2a); }
  .task.light { background: linear-gradient(170deg, #e8e8e8, #9a9a9a 60%, #777); border-color: #ddd; }
  time { margin: 0 32px 0 203px; padding-top: 3px; color: #fff; font-size: 11px; line-height: 11px; }
  .flag { width: 15px; height: 3px; margin: 11px 9px 0 0; background: #fff; }
  .peek { width: 13px; border: 1px solid #888; background: linear-gradient(135deg, #888, #222); }
</style>
